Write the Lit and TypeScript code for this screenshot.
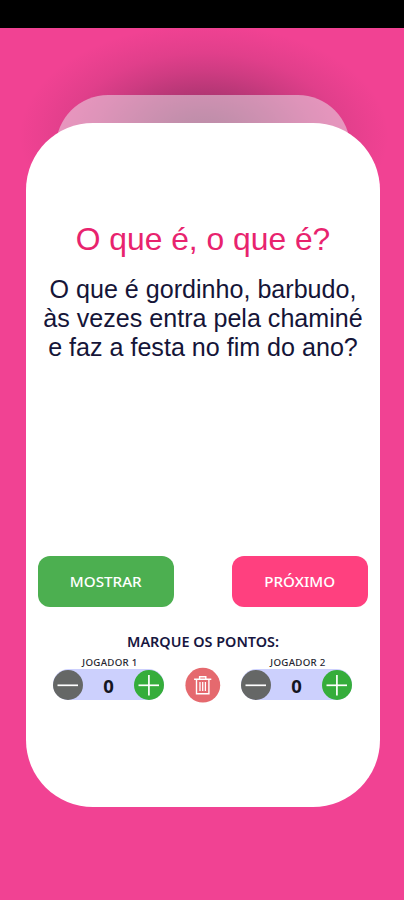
import { LitElement, html, css, svg } from "lit";
import { customElement, property, state } from "lit/decorators.js";

@customElement("score-counter")
class ScoreCounter extends LitElement {
  @property() label = "";
  @property({ type: Number }) value = 0;

  static styles = css`
    :host { display: block; width: 111px; }
    .label {
      height: 13px; line-height: 13px; font-size: 9.7px; font-weight: 500;
      letter-spacing: 0.3px; text-align: center; color: #25252f;
      padding-left: 3px; white-space: nowrap;
    }
    .bar {
      display: flex; align-items: center; justify-content: space-between;
      height: 31px; border-radius: 16px; background: #ccd0fd;
    }
    .value { font-size: 18.5px; font-weight: 700; line-height: 31px; padding-top: 2px; color: #15151f; }
    button { display: block; width: 30px; height: 30px; border: 0; padding: 0; background: none; }
    svg { display: block; }
  `;

  render() {
    const circle = (fill: string, plus: boolean) => html`
      <svg width="30" height="30" viewBox="0 0 30 30">
        <circle cx="15" cy="15" r="15" fill=${fill} />
        <path d="M4.5 15.3H25" stroke="#fff" stroke-width="1.7" />
        ${plus ? svg`<path d="M14.9 5V25.5" stroke="#fff" stroke-width="1.7" />` : ""}
      </svg>`;
    return html`
      <div class="label">${this.label}</div>
      <div class="bar">
        <button aria-label="Menos" @click=${() => this.value--}>${circle("#656766", false)}</button>
        <span class="value">${this.value}</span>
        <button aria-label="Mais" @click=${() => this.value++}>${circle("#35ad3b", true)}</button>
      </div>`;
  }
}

@customElement("app-root")
class AppRoot extends LitElement {
  @state() private heading = "O que é, o que é?";

  static styles = css`
    :host {
      display: block; position: relative; width: 404px; height: 900px; overflow: hidden;
      background: #f14293; font-family: "Noto Sans", sans-serif;
    }
    .status { height: 28px; background: #000; }
    .stage {
      position: relative; height: 872px; padding: 95px 24px 0 26px; box-sizing: border-box;
      background: radial-gradient(ellipse 185px 112px at 204px 108px,
        rgba(58, 32, 56, 0.56) 0%, rgba(58, 32, 56, 0.48) 18%, rgba(58, 32, 56, 0.32) 40%,
        rgba(58, 32, 56, 0.19) 58%, rgba(58, 32, 56, 0.09) 74%, rgba(58, 32, 56, 0.03) 90%, rgba(58, 32, 56, 0) 100%);
    }
    .back {
      position: absolute; left: 56px; top: 67px; width: 294px; height: 100px;
      border-radius: 52px 52px 0 0; background: rgba(235, 235, 240, 0.5);
    }
    .card {
      position: relative; box-sizing: border-box; width: 354px; height: 683.5px;
      padding: 98px 12px 0; border-radius: 67px; background: #fff;
      display: flex; flex-direction: column; align-items: stretch;
    }
    h1, p {
      margin: 0; font-family: "Liberation Sans", Arial, sans-serif; font-weight: 400;
      text-align: center; white-space: nowrap;
    }
    h1 { font-size: 31.8px; line-height: 37px; color: #e8236e; }
    p { margin-top: 17px; height: 87px; font-size: 25.1px; line-height: 29px; color: #151538; align-self: center; }
    .actions { display: flex; justify-content: space-between; margin: 194px 0.5px 0 0; }
    .action {
      width: 135.5px; height: 51px; border: 0; border-radius: 12px; padding: 0 0 2px;
      font: 500 15.2px "Noto Sans", sans-serif; color: #fff;
    }
    .show { background: #4caf50; }
    .next { background: #ff407f; }
    .heading {
      margin-top: 26px; height: 18px; line-height: 18px; text-align: center;
      font-size: 14.4px; font-weight: 600; color: #171640; white-space: nowrap;
    }
    .scores { display: flex; align-items: flex-start; justify-content: space-between; margin: 5px 16px 0 15px; }
    .trash { width: 36px; height: 36px; margin: 11px 0 0 0; border: 0; padding: 0; background: none; }
    svg { display: block; }
  `;

  render() {
    return html`
      <div class="status"></div>
      <div class="stage">
        <div class="back"></div>
        <main class="card">
          <h1>${this.heading}</h1>
          <p>O que é gordinho, barbudo,<br />às vezes entra pela chaminé<br />e faz a festa no fim do ano?</p>
          <div class="actions">
            <button class="action show">MOSTRAR</button>
            <button class="action next">PRÓXIMO</button>
          </div>
          <div class="heading">MARQUE OS PONTOS:</div>
          <div class="scores">
            <score-counter label="JOGADOR 1"></score-counter>
            <button class="trash" aria-label="Zerar">
              <svg width="36" height="36" viewBox="0 0 36 36">
                <circle cx="17.8" cy="18.2" r="17.4" fill="#e5696e" />
                <g fill="none" stroke="#fff" stroke-width="1.4">
                  <path d="M9.1 12.2H26.3M14.6 11.8V9.8H20.8V11.8M11.5 12.5V26.8H23.9V12.5" />
                  <path d="M15 15V24M17.7 15V24M20.4 15V24" stroke-width="1.3" />
                </g>
              </svg>
            </button>
            <score-counter label="JOGADOR 2"></score-counter>
          </div>
        </main>
      </div>`;
  }
}
